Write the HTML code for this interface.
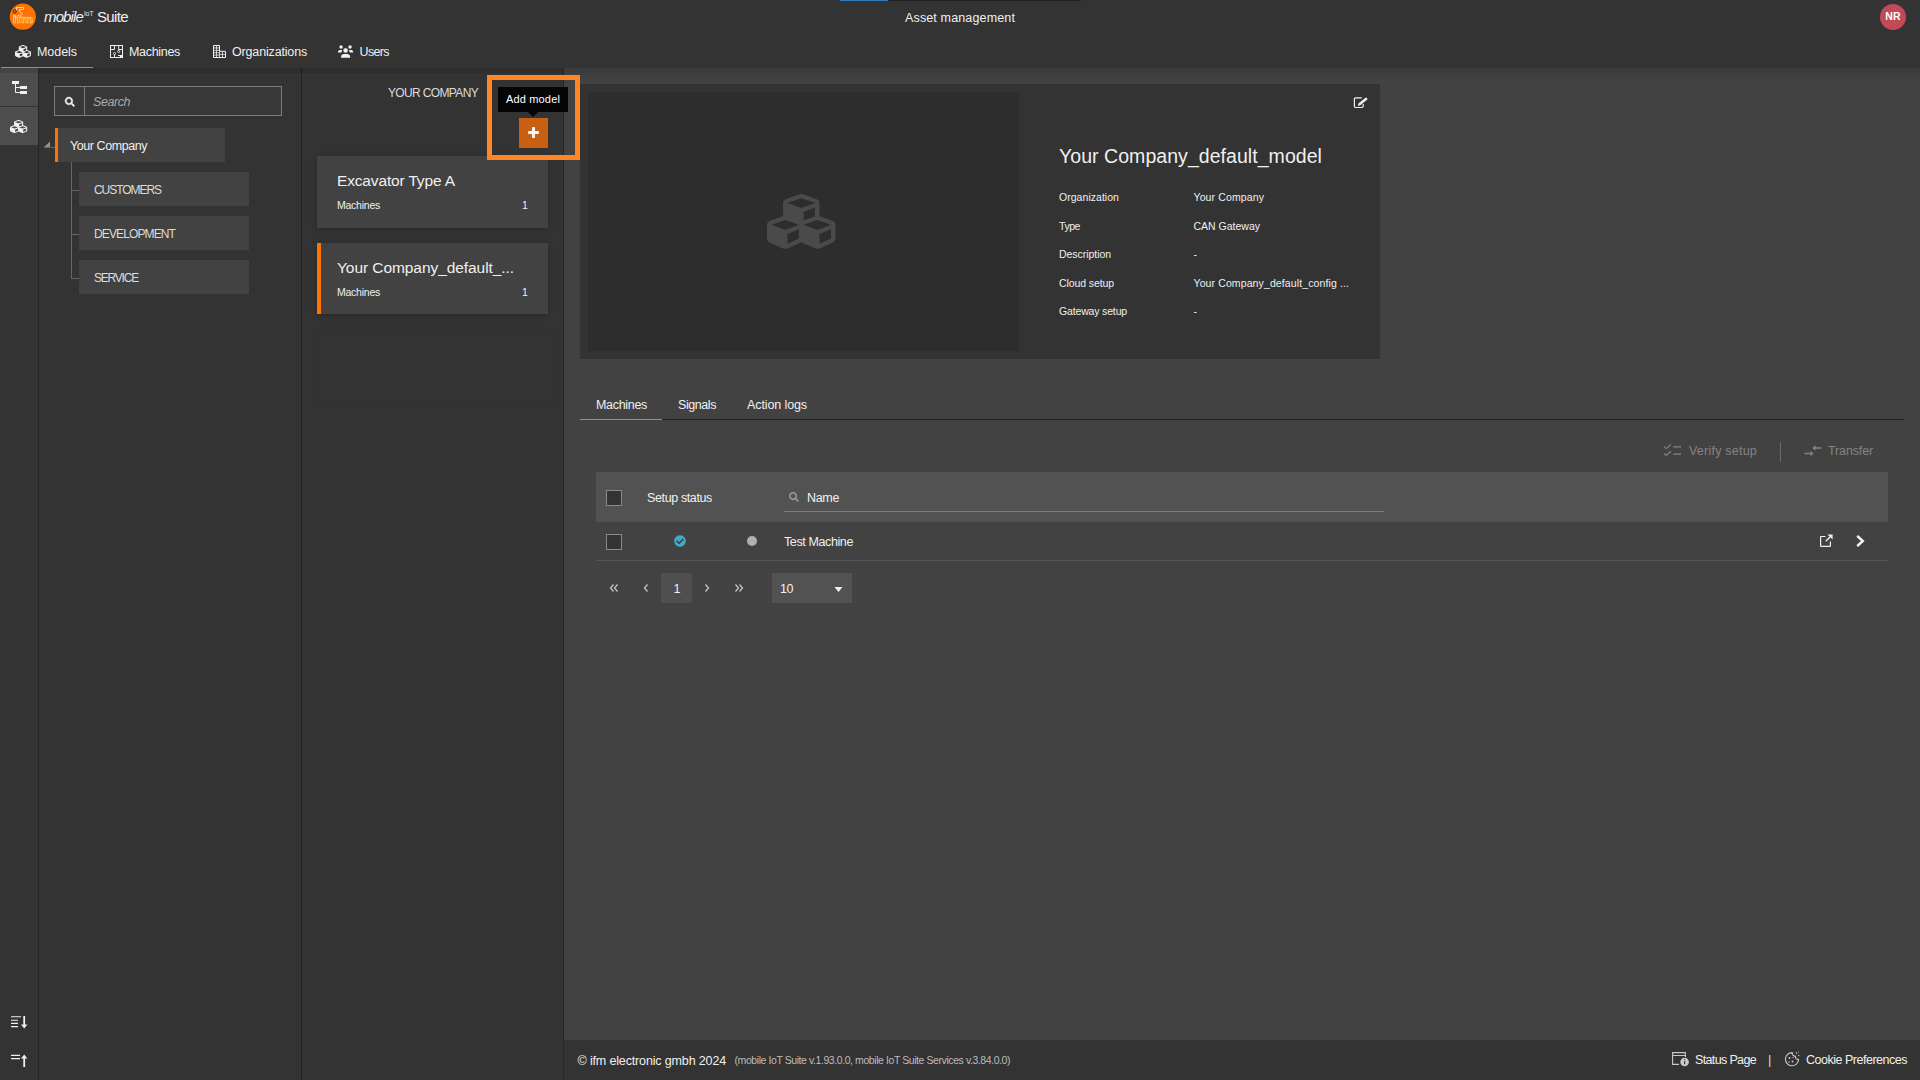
<!DOCTYPE html>
<html lang="en">
<head>
<meta charset="utf-8">
<title>Asset management</title>
<style>
html,body{margin:0;padding:0;}
body{width:1920px;height:1080px;overflow:hidden;background:#424242;position:relative;
 font-family:"Liberation Sans",sans-serif;font-size:13px;color:#f0f0f0;}
*{box-sizing:border-box;}
.abs{position:absolute;}
.t{position:absolute;white-space:nowrap;height:20px;line-height:20px;}
svg{position:absolute;display:block;overflow:visible;}
/* header */
#header{left:0;top:0;width:1920px;height:68px;background:#333;}
#progress{left:840px;top:0;width:241px;height:1px;background:#1f1f1f;}
#progress i{display:block;width:48px;height:1px;background:#2f7fc1;}
#navline{left:1px;top:67px;width:91.5px;height:1px;background:#ff7300;}
#avatar{left:1880px;top:4px;width:26px;height:26px;border-radius:50%;background:#c04a56;
 color:#fff;font-weight:bold;font-size:10.5px;line-height:25px;text-align:center;letter-spacing:0.2px;}
/* sidebar */
#sidebar{left:0;top:68px;width:38px;height:1012px;background:#333;}
#sideborder{left:38px;top:68px;width:1px;height:1012px;background:#262626;}
.sbtn{left:0;width:38px;height:38px;background:#4d4d4d;}
/* tree panel */
#tree{left:39px;top:68px;width:262px;height:1012px;background:#333;}
#treeborder{left:301px;top:68px;width:1px;height:1012px;background:#222;}
#search{left:54px;top:86px;width:228px;height:30px;border:1px solid #7d7d7d;background:#383838;}
#searchdiv{left:84px;top:87px;width:1px;height:28px;background:#7d7d7d;}
.node{background:#424242;height:34px;}
.tl{background:#666;}
/* list panel */
#list{left:302px;top:68px;width:261px;height:1012px;background:#333;}
#listborder{left:563px;top:68px;width:1px;height:1012px;background:#262626;}
.card{left:317px;width:231px;background:#424242;box-shadow:0 1px 6px rgba(0,0,0,.24);}
#hl{left:487px;top:75px;width:93px;height:85px;border:5px solid #ff8527;}
#tip{left:498px;top:87px;width:70px;height:25px;background:#050505;}
#tiparrow{left:528px;top:112px;width:0;height:0;border-left:5px solid transparent;border-right:5px solid transparent;border-top:5px solid #050505;}
#plus{left:519px;top:118px;width:29px;height:30px;background:#c95f12;}
/* main */
#shadow{left:0;top:68px;width:563px;height:5px;background:rgba(0,0,0,.1);}
#shadow2{left:564px;top:68px;width:1356px;height:12px;background:linear-gradient(rgba(0,0,0,.13),rgba(0,0,0,0));}
#detail{left:580px;top:84px;width:800px;height:275px;background:#333;}
#img{left:588px;top:92px;width:431px;height:259px;background:#2d2d2d;}
#tabline{left:580px;top:419px;width:1324px;height:1px;background:#222;}
#tabactive{left:580px;top:419px;width:82px;height:1px;background:#ff7300;}
#thead{left:596px;top:472px;width:1292px;height:50px;background:#525252;}
.cb{width:16px;height:16px;border:1px solid #8a8a8a;background:#333;left:606px;}
#nameline{left:784px;top:511px;width:600px;height:1px;background:#7a7a7a;}
#rowline{left:596px;top:560px;width:1292px;height:1px;background:#575757;}
#pg1{left:661px;top:573px;width:31px;height:30px;background:#4f4f4f;}
#pgsel{left:772px;top:573px;width:80px;height:30px;background:#525252;}
#tbdiv{left:1780px;top:442px;width:1px;height:20px;background:#6a6a6a;}
#footer{left:564px;top:1040px;width:1356px;height:40px;background:#333;}
.g{color:#8c8c8c;}
</style>
</head>
<body>
<div id="header" class="abs"></div>
<div id="progress" class="abs"><i></i></div>
<div id="sidebar" class="abs"></div>
<div id="sideborder" class="abs"></div>
<div class="abs sbtn" style="top:68px"></div>
<div class="abs sbtn" style="top:107px;height:38px"></div>
<div id="tree" class="abs"></div>
<div id="treeborder" class="abs"></div>
<div id="list" class="abs"></div>
<div id="listborder" class="abs"></div>
<div id="footer" class="abs"></div>
<div id="shadow" class="abs"></div><div id="shadow2" class="abs"></div>
<div id="navline" class="abs"></div>
<svg style="left:10px;top:4px" width="26" height="26" viewBox="0 0 26 26"><circle cx="12.8" cy="12.7" r="13.1" fill="#ff7300"/><text x="2.8" y="19.4" font-size="11.5" font-family="Liberation Sans, sans-serif" font-weight="bold" textLength="20.4" lengthAdjust="spacingAndGlyphs" fill="none" stroke="#ffe3cc" stroke-width="0.6" opacity=".85">ifm</text><path d="M6.5 6.5V3.5H13.5V5.5H9.5V7.5L13 10.5" stroke="#ffe3cc" stroke-width="1" fill="none" opacity=".85"/><circle cx="4.7" cy="7.5" r="1.6" fill="none" stroke="#2b1608" stroke-width="0.9"/></svg>
<span class="t" style="left:44px;top:6.80px;font-size:15px;letter-spacing:-0.865px;font-style:italic;">mobile</span>
<span class="t" style="left:84px;top:3.75px;font-size:6.5px;letter-spacing:0.536px;letter-spacing:0;">IoT</span>
<span class="t" style="left:97px;top:6.80px;font-size:15px;letter-spacing:-0.638px;">Suite</span>
<span class="t" style="left:905px;top:7.67px;font-size:12.5px;letter-spacing:0.144px;">Asset management</span>
<div id="avatar" class="abs">NR</div>
<svg style="left:15px;top:44.7px" width="16" height="12.8" viewBox="0 32 512 448" preserveAspectRatio="none" ><path fill="#f0f0f0" d="M488.6 250.2L392 214V105.5c0-15-9.3-28.4-23.4-33.7l-100-37.500c-8.100-3.100-17.100-3.100-25.300 0l-100 37.500c-14.100 5.300-23.400 18.700-23.400 33.700V214l-96.600 36.200C9.300 255.500 0 268.900 0 283.900V394c0 13.600 7.700 26.100 19.900 32.200l100 50c10.100 5.100 22.100 5.100 32.200 0l103.900-52 103.900 52c10.100 5.100 22.100 5.100 32.200 0l100-50c12.200-6.100 19.900-18.600 19.900-32.200V283.900c0-15-9.300-28.400-23.400-33.700zM358 214.800l-85 31.900v-68.200l85-37v73.300zM154 104.100l102-38.200 102 38.200v.6l-102 41.400-102-41.400v-.6zm84 291.100l-85 42.500v-79.100l85-38.800v75.400zm0-112l-102 41.400-102-41.400v-.6l102-38.200 102 38.200v.6zm240 112l-85 42.500v-79.100l85-38.800v75.400zm0-112l-102 41.400-102-41.400v-.6l102-38.200 102 38.200v.6z"/></svg>
<span class="t" style="left:37px;top:41.67px;font-size:12.5px;letter-spacing:-0.049px;">Models</span>
<svg style="left:110px;top:45px" width="13" height="13" viewBox="0 0 13 13"><rect x="0.5" y="0.5" width="12" height="12" fill="none" stroke="#f0f0f0" stroke-width="1"/><path d="M4.5 0.5V4.5H0.5M8.7 0.5V5.4M12.5 4.5H9M4.5 9.6V12.5M8 10.5H10.5" fill="none" stroke="#f0f0f0" stroke-width="0.95"/><rect x="10" y="10" width="2.5" height="2.5" fill="#f0f0f0"/><circle cx="8.7" cy="6.5" r="1.05" fill="none" stroke="#f0f0f0" stroke-width="0.8"/><circle cx="4.5" cy="8.5" r="1.05" fill="none" stroke="#f0f0f0" stroke-width="0.8"/></svg>
<span class="t" style="left:129px;top:41.67px;font-size:12.5px;letter-spacing:-0.312px;">Machines</span>
<svg style="left:213px;top:45px" width="13" height="13" viewBox="0 0 13 13"><path d="M0.5 0.5H6.5V6.3H12.5V12.5H0.5Z" fill="none" stroke="#f0f0f0" stroke-width="1"/><path d="M3.5 0.5V12.5M6.5 6.3V12.5M9.5 6.3V12.5M0.5 2.9H6.5M0.5 5.3H6.5M0.5 7.7H6.5M0.5 10.1H6.5M6.5 9.4H12.5" fill="none" stroke="#f0f0f0" stroke-width="0.75"/></svg>
<span class="t" style="left:232px;top:41.67px;font-size:12.5px;letter-spacing:-0.163px;">Organizations</span>
<svg style="left:337px;top:44px" width="18" height="15" viewBox="0 0 18 15"><circle cx="4.05" cy="3.05" r="1.7" fill="#f0f0f0"/><circle cx="13.05" cy="3.05" r="1.7" fill="#f0f0f0"/><path d="M0.9 8.6C0.9 7 1.8 6.1 3 6.1H4.7C5 6.1 5.2 6.3 5.2 6.5L4.3 8.6Z" fill="#f0f0f0"/><path d="M16.3 8.6C16.3 7 15.4 6.1 14.2 6.1H12.5C12.2 6.1 12 6.3 12 6.5L12.9 8.6Z" fill="#f0f0f0"/><circle cx="8.6" cy="6.5" r="2.4" fill="#f0f0f0" stroke="#333" stroke-width="0.3"/><path d="M4.1 13.8V12.6C4.1 11 5.4 10 7 10H10.2C11.8 10 13.1 11 13.1 12.6V13.8Z" fill="#f0f0f0"/></svg>
<span class="t" style="left:359.6px;top:41.67px;font-size:12.5px;letter-spacing:-0.688px;">Users</span>
<svg style="left:12px;top:81px" width="15" height="13" viewBox="0 0 15 13"><rect x="0" y="0" width="7" height="3" fill="#f0f0f0"/><rect x="8" y="5" width="7" height="3" fill="#f0f0f0"/><rect x="8" y="10" width="7" height="3" fill="#f0f0f0"/><path d="M3.5 3V11.5H8M3.5 6.5H8" fill="none" stroke="#f0f0f0" stroke-width="1"/></svg>
<svg style="left:10px;top:119.8px" width="17.2" height="13.2" viewBox="0 32 512 448" preserveAspectRatio="none" ><path fill="#f0f0f0" d="M488.6 250.2L392 214V105.5c0-15-9.3-28.4-23.4-33.7l-100-37.500c-8.100-3.100-17.100-3.100-25.300 0l-100 37.500c-14.100 5.300-23.400 18.700-23.400 33.700V214l-96.600 36.200C9.300 255.500 0 268.900 0 283.900V394c0 13.600 7.700 26.100 19.900 32.200l100 50c10.100 5.100 22.100 5.100 32.200 0l103.900-52 103.900 52c10.100 5.100 22.100 5.100 32.200 0l100-50c12.200-6.100 19.900-18.600 19.900-32.200V283.900c0-15-9.300-28.400-23.400-33.700zM358 214.800l-85 31.900v-68.200l85-37v73.300zM154 104.100l102-38.200 102 38.200v.6l-102 41.400-102-41.400v-.6zm84 291.100l-85 42.500v-79.100l85-38.800v75.400zm0-112l-102 41.400-102-41.400v-.6l102-38.200 102 38.200v.6zm240 112l-85 42.500v-79.100l85-38.800v75.400zm0-112l-102 41.400-102-41.400v-.6l102-38.200 102 38.200v.6z"/></svg>
<svg style="left:11px;top:1016px" width="17" height="13" viewBox="0 0 17 13"><path d="M0 0.8H10M0 4.2H7M0 7.4H7M0 10.6H7" stroke="#f0f0f0" stroke-width="1.1" fill="none"/><path d="M13.2 0V10" stroke="#f0f0f0" stroke-width="1.8" fill="none"/><path d="M10 8.6H16.4L13.2 12.6Z" fill="#f0f0f0"/></svg>
<svg style="left:11px;top:1054px" width="17" height="13" viewBox="0 0 17 13"><path d="M0 1.4H9M0 4.6H9" stroke="#f0f0f0" stroke-width="1.1" fill="none"/><path d="M13.2 3V13" stroke="#f0f0f0" stroke-width="1.8" fill="none"/><path d="M10 4.4H16.4L13.2 0.4Z" fill="#f0f0f0"/></svg>
<div id="search" class="abs"></div><div id="searchdiv" class="abs"></div>
<svg style="left:65px;top:97px" width="9.6" height="9.6" viewBox="0 0 512 512" preserveAspectRatio="xMidYMid meet" stroke="#f0f0f0" stroke-width="22"><path fill="#f0f0f0" d="M505 442.700L405.300 343c-4.500-4.500-10.600-7-17-7H372c27.600-35.300 44-79.700 44-128C416 93.100 322.900 0 208 0S0 93.100 0 208s93.100 208 208 208c48.300 0 92.700-16.400 128-44v16.300c0 6.400 2.500 12.500 7 17l99.700 99.700c9.400 9.400 24.600 9.400 33.900 0l28.300-28.300c9.400-9.400 9.400-24.600.1-34zM208 336c-70.700 0-128-57.200-128-128 0-70.700 57.200-128 128-128 70.700 0 128 57.200 128 128 0 70.700-57.200 128-128 128z"/></svg>
<span class="t" style="left:93px;top:91.67px;font-size:12.5px;letter-spacing:-0.434px;font-style:italic;color:#a9a9a9;">Search</span>
<div class="abs node" style="left:55px;top:128px;width:170px;border-left:3px solid #ff7300"></div>
<svg style="left:43px;top:141px" width="8" height="7" viewBox="0 0 8 7"><path d="M7 0.5V6.5H0.5Z" fill="#8e9492"/></svg>
<div class="abs tl" style="left:50px;top:147px;width:5px;height:1px"></div>
<span class="t" style="left:70px;top:135.67px;font-size:12.5px;letter-spacing:-0.436px;">Your Company</span>
<div class="abs tl" style="left:71px;top:162px;width:1px;height:117px"></div>
<div class="abs node" style="left:79px;top:172px;width:170px"></div>
<div class="abs tl" style="left:71px;top:190px;width:8px;height:1px"></div>
<span class="t" style="left:94px;top:179.84px;font-size:12px;letter-spacing:-1.050px;color:#dcdcdc;">CUSTOMERS</span>
<div class="abs node" style="left:79px;top:216px;width:170px"></div>
<div class="abs tl" style="left:71px;top:234px;width:8px;height:1px"></div>
<span class="t" style="left:94px;top:223.84px;font-size:12px;letter-spacing:-0.881px;color:#dcdcdc;">DEVELOPMENT</span>
<div class="abs node" style="left:79px;top:260px;width:170px"></div>
<div class="abs tl" style="left:71px;top:278px;width:8px;height:1px"></div>
<span class="t" style="left:94px;top:267.84px;font-size:12px;letter-spacing:-1.209px;color:#dcdcdc;">SERVICE</span>
<span class="t" style="left:388px;top:82.84px;font-size:12px;letter-spacing:-0.649px;color:#dcdcdc;">YOUR COMPANY</span>
<div class="abs card" style="top:156px;height:72px"></div>
<div class="abs card" style="top:243px;height:71px;border-left:4px solid #ff7300"></div>
<div class="abs" style="left:315px;top:330px;width:238px;height:72px;box-shadow:0 0 2px rgba(0,0,0,.18)"></div>
<span class="t" style="left:337px;top:171.23px;font-size:15.5px;letter-spacing:-0.155px;">Excavator Type A</span>
<span class="t" style="left:337px;top:195.36px;font-size:10.5px;letter-spacing:-0.242px;">Machines</span>
<span class="t" style="left:522px;top:195.36px;font-size:10.5px;letter-spacing:-0.840px;">1</span>
<span class="t" style="left:337px;top:258.23px;font-size:15.5px;letter-spacing:-0.069px;">Your Company_default_...</span>
<span class="t" style="left:337px;top:282.36px;font-size:10.5px;letter-spacing:-0.242px;">Machines</span>
<span class="t" style="left:522px;top:282.36px;font-size:10.5px;letter-spacing:-0.840px;">1</span>
<div id="hl" class="abs"></div><div id="tip" class="abs"></div><div id="tiparrow" class="abs"></div><div id="plus" class="abs"></div>
<span class="t" style="left:506px;top:89.19px;font-size:11px;letter-spacing:0.157px;color:#fff;">Add model</span>
<svg style="left:528px;top:127px" width="11" height="11" viewBox="0 0 11 11"><rect x="0" y="4" width="11" height="3" rx="0.8" fill="#f4f4f4"/><rect x="4" y="0" width="3" height="11" rx="0.8" fill="#f4f4f4"/></svg>
<div id="detail" class="abs"></div><div id="img" class="abs"></div>
<svg style="left:767px;top:194px" width="68.5" height="55" viewBox="0 32 512 448" preserveAspectRatio="none" ><path fill="#4a4a4a" d="M488.6 250.2L392 214V105.5c0-15-9.3-28.4-23.4-33.7l-100-37.500c-8.100-3.100-17.100-3.100-25.300 0l-100 37.500c-14.100 5.300-23.400 18.700-23.400 33.700V214l-96.600 36.200C9.300 255.500 0 268.900 0 283.900V394c0 13.600 7.700 26.100 19.900 32.200l100 50c10.100 5.100 22.100 5.100 32.200 0l103.900-52 103.900 52c10.100 5.100 22.100 5.100 32.200 0l100-50c12.200-6.100 19.900-18.600 19.900-32.200V283.900c0-15-9.300-28.400-23.400-33.700zM358 214.800l-85 31.900v-68.200l85-37v73.300zM154 104.100l102-38.200 102 38.200v.6l-102 41.400-102-41.400v-.6zm84 291.100l-85 42.500v-79.100l85-38.800v75.400zm0-112l-102 41.400-102-41.400v-.6l102-38.200 102 38.200v.6zm240 112l-85 42.500v-79.100l85-38.800v75.400zm0-112l-102 41.400-102-41.400v-.6l102-38.200 102 38.200v.6z"/></svg>
<svg style="left:1353px;top:96px" width="16" height="13" viewBox="0 0 16 13"><path d="M8.8 1.9H2.6Q1.4 1.9 1.4 3.1V10.3Q1.4 11.5 2.6 11.5H9Q10.2 11.5 10.2 10.3V8" fill="none" stroke="#f0f0f0" stroke-width="1.2"/><path d="M6.2 8.5L13.9 2.2" fill="none" stroke="#f0f0f0" stroke-width="2.5"/><path d="M4.8 9.8L7.2 9.4L5.4 7.4Z" fill="#f0f0f0"/></svg>
<span class="t" style="left:1059px;top:146.24px;font-size:19.5px;letter-spacing:0.053px;">Your Company_default_model</span>
<span class="t" style="left:1059px;top:187.36px;font-size:10.5px;letter-spacing:0.039px;">Organization</span>
<span class="t" style="left:1193.5px;top:187.36px;font-size:10.5px;letter-spacing:0.119px;">Your Company</span>
<span class="t" style="left:1059px;top:216.36px;font-size:10.5px;letter-spacing:-0.441px;">Type</span>
<span class="t" style="left:1193.5px;top:216.36px;font-size:10.5px;">CAN Gateway</span>
<span class="t" style="left:1059px;top:244.36px;font-size:10.5px;letter-spacing:-0.047px;">Description</span>
<span class="t" style="left:1193.5px;top:244.36px;font-size:10.5px;">-</span>
<span class="t" style="left:1059px;top:273.36px;font-size:10.5px;letter-spacing:-0.094px;">Cloud setup</span>
<span class="t" style="left:1193.5px;top:273.36px;font-size:10.5px;letter-spacing:0.114px;">Your Company_default_config ...</span>
<span class="t" style="left:1059px;top:301.36px;font-size:10.5px;letter-spacing:-0.157px;">Gateway setup</span>
<span class="t" style="left:1193.5px;top:301.36px;font-size:10.5px;">-</span>
<div id="tabline" class="abs"></div><div id="tabactive" class="abs"></div>
<span class="t" style="left:596px;top:394.67px;font-size:12.5px;letter-spacing:-0.312px;">Machines</span>
<span class="t" style="left:678px;top:394.67px;font-size:12.5px;letter-spacing:-0.428px;">Signals</span>
<span class="t" style="left:747px;top:394.67px;font-size:12.5px;letter-spacing:-0.104px;">Action logs</span>
<svg style="left:1663px;top:444px" width="19" height="13" viewBox="0 0 19 13"><path d="M1 2.6L3.2 4.6L8 0.5M1 9.4L3.2 11.4L8 7.3" fill="none" stroke="#848484" stroke-width="1.15"/><path d="M10.2 2.9H18M10.2 10H18" fill="none" stroke="#848484" stroke-width="1.25"/></svg>
<span class="t" style="left:1689px;top:440.67px;font-size:12.5px;letter-spacing:0.224px;color:#848484;">Verify setup</span>
<div id="tbdiv" class="abs"></div>
<svg style="left:1803.5px;top:445px" width="18" height="12" viewBox="0 0 18 12"><path d="M9 3H17.5M0.5 8.5H9" fill="none" stroke="#848484" stroke-width="1.3"/><path d="M8.5 3L11.5 0.3V5.7ZM9.5 8.5L6.5 5.8V11.2Z" fill="#848484"/></svg>
<span class="t" style="left:1828px;top:440.67px;font-size:12.5px;letter-spacing:-0.134px;color:#848484;">Transfer</span>
<div id="thead" class="abs"></div>
<div class="abs cb" style="top:490px"></div><div class="abs cb" style="top:534px"></div>
<span class="t" style="left:647px;top:487.67px;font-size:12.5px;letter-spacing:-0.374px;">Setup status</span>
<svg style="left:789px;top:492px" width="10" height="10" viewBox="0 0 512 512" preserveAspectRatio="xMidYMid meet" ><path fill="#9a9a9a" d="M505 442.700L405.300 343c-4.500-4.500-10.600-7-17-7H372c27.600-35.300 44-79.700 44-128C416 93.100 322.900 0 208 0S0 93.100 0 208s93.100 208 208 208c48.300 0 92.700-16.400 128-44v16.300c0 6.400 2.500 12.500 7 17l99.700 99.700c9.400 9.400 24.600 9.400 33.900 0l28.300-28.300c9.400-9.400 9.400-24.600.1-34zM208 336c-70.700 0-128-57.200-128-128 0-70.700 57.200-128 128-128 70.700 0 128 57.200 128 128 0 70.700-57.200 128-128 128z"/></svg>
<span class="t" style="left:807px;top:487.67px;font-size:12.5px;letter-spacing:-0.336px;">Name</span>
<div id="nameline" class="abs"></div><div id="rowline" class="abs"></div>
<div class="abs" style="left:676px;top:537px;width:8px;height:8px;background:#3b3b3b;border-radius:50%"></div>
<svg style="left:674px;top:535px" width="12" height="12" viewBox="0 0 512 512" preserveAspectRatio="xMidYMid meet" ><path fill="#3fa9c9" d="M504 256c0 136.967-111.033 248-248 248S8 392.967 8 256 119.033 8 256 8s248 111.033 248 248zM227.314 387.314l184-184c6.248-6.248 6.248-16.379 0-22.627l-22.627-22.627c-6.248-6.249-16.379-6.249-22.628 0L216 308.118l-70.059-70.059c-6.248-6.248-16.379-6.248-22.628 0l-22.627 22.627c-6.248 6.248-6.248 16.379 0 22.627l104 104c6.249 6.249 16.379 6.249 22.628.001z"/></svg>
<div class="abs" style="left:747px;top:536px;width:10px;height:10px;background:#a9b3af;border-radius:50%"></div>
<span class="t" style="left:784px;top:531.67px;font-size:12.5px;letter-spacing:-0.387px;">Test Machine</span>
<svg style="left:1820px;top:534.3px" width="13" height="13" viewBox="0 0 13 13"><path d="M5.5 2.5H1.2C0.8 2.5 0.6 2.8 0.6 3.1V11.8C0.6 12.1 0.8 12.4 1.2 12.4H9.8C10.2 12.4 10.4 12.1 10.4 11.8V7.5" fill="none" stroke="#f0f0f0" stroke-width="1.2"/><path d="M5.8 7.2L11.5 1.5" fill="none" stroke="#f0f0f0" stroke-width="1.4"/><path d="M7.5 0.4H12.6V5.5Z" fill="#f0f0f0"/></svg>
<svg style="left:1850px;top:530px" width="20" height="22" viewBox="0 0 20 22"><path d="M7.2 5.8L12.8 11L7.2 16.2" fill="none" stroke="#f4f4f4" stroke-width="2.5"/></svg>
<div id="pg1" class="abs"></div><div id="pgsel" class="abs"></div>
<svg pointer-events="none" style="left:0px;top:0px" width="1920" height="1080" viewBox="0 0 1920 1080"><path d="M613.5 584.5L610.5 588.0L613.5 591.5" fill="none" stroke="#c4c4c4" stroke-width="1.3"/><path d="M617.5 584.5L614.5 588.0L617.5 591.5" fill="none" stroke="#c4c4c4" stroke-width="1.3"/><path d="M647.5 584.5L644.5 588.0L647.5 591.5" fill="none" stroke="#c4c4c4" stroke-width="1.3"/><path d="M705.5 584.5L708.5 588.0L705.5 591.5" fill="none" stroke="#c4c4c4" stroke-width="1.3"/><path d="M735.5 584.5L738.5 588.0L735.5 591.5" fill="none" stroke="#c4c4c4" stroke-width="1.3"/><path d="M739.5 584.5L742.5 588.0L739.5 591.5" fill="none" stroke="#c4c4c4" stroke-width="1.3"/><path d="M834.5 587H842.5L838.5 592Z" fill="#f0f0f0"/></svg>
<span class="t" style="left:673.5px;top:578.67px;font-size:12.5px;letter-spacing:-0.952px;">1</span>
<span class="t" style="left:780px;top:578.67px;font-size:12.5px;letter-spacing:-0.452px;">10</span>
<span class="t" style="left:577.5px;top:1050.67px;font-size:12.5px;letter-spacing:-0.148px;">© ifm electronic gmbh 2024</span>
<span class="t" style="left:734.5px;top:1050.36px;font-size:10.5px;letter-spacing:-0.422px;color:#bdbdbd;">(mobile IoT Suite v.1.93.0.0, mobile IoT Suite Services v.3.84.0.0)</span>
<svg style="left:1672px;top:1052px" width="18" height="15" viewBox="0 0 18 15"><path d="M7 12.4H0.6V0.6H13.4V5" fill="none" stroke="#c9c9c9" stroke-width="1.1"/><path d="M0.6 3.5H13.4" fill="none" stroke="#c9c9c9" stroke-width="1"/><circle cx="12.6" cy="10" r="4.3" fill="#c9c9c9"/><path d="M12.6 9.3V12.3M12.6 7.2V8.2" stroke="#333" stroke-width="1.2" fill="none"/></svg>
<span class="t" style="left:1695px;top:1049.67px;font-size:12.5px;letter-spacing:-0.646px;">Status Page</span>
<span class="t" style="left:1768px;top:1049.50px;font-size:13px;letter-spacing:-0.377px;color:#d9d9d9;">|</span>
<svg style="left:1784px;top:1051px" width="16" height="16" viewBox="0 0 16 16"><path d="M8.2 1.6A6.6 6.6 0 1 0 14.6 8.6A3 3 0 0 1 11.4 5.2A3 3 0 0 1 8.2 1.6Z" fill="none" stroke="#c9c9c9" stroke-width="1.1"/><circle cx="5.5" cy="7" r="0.9" fill="#c9c9c9"/><circle cx="8.5" cy="10.5" r="0.9" fill="#c9c9c9"/><circle cx="5" cy="11" r="0.7" fill="#c9c9c9"/><circle cx="9" cy="6.6" r="0.6" fill="#c9c9c9"/><circle cx="12.5" cy="2" r="0.8" fill="#c9c9c9"/><circle cx="14.8" cy="4.5" r="0.7" fill="#c9c9c9"/><circle cx="14.5" cy="1" r="0.5" fill="#c9c9c9"/></svg>
<span class="t" style="left:1806px;top:1049.67px;font-size:12.5px;letter-spacing:-0.488px;">Cookie Preferences</span>
</body>
</html>
